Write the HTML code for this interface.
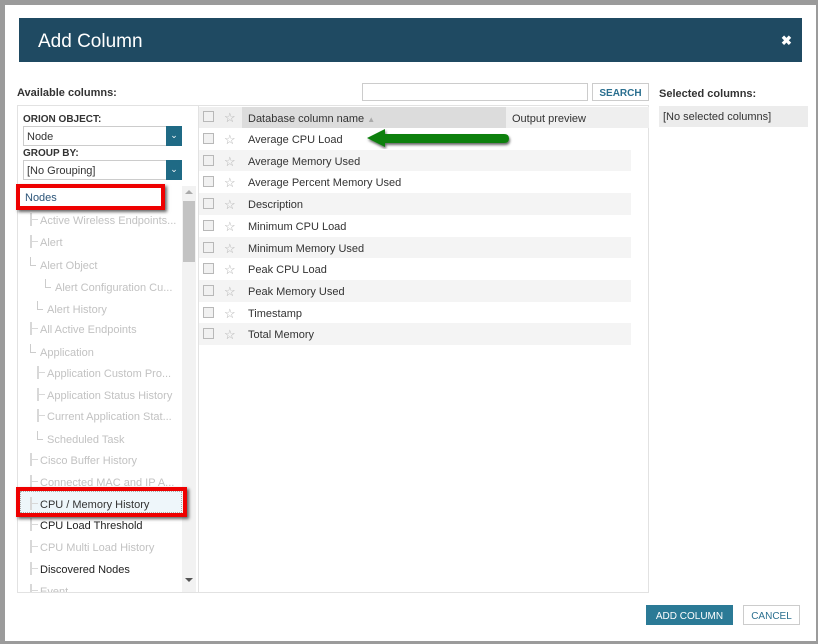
<!DOCTYPE html>
<html><head><meta charset="utf-8"><style>
*{margin:0;padding:0;box-sizing:border-box}
body{width:818px;height:644px;background:#9b9b9b;position:relative;overflow:hidden;font-family:"Liberation Sans",sans-serif;font-size:11px;color:#333}
.a{position:absolute}
#dlg{left:5px;top:5px;width:811px;height:636px;background:#fff}
#hdr{left:19px;top:18px;width:783px;height:44px;background:#1f4a62}
.t{white-space:nowrap}
.cb{position:absolute;width:11px;height:11px;border:1px solid #b8b8b8;background:#f1f1f1}
.star{position:absolute;color:#b0b0b0;font-size:13px;line-height:13px}
.tree{position:absolute;left:26px;white-space:nowrap;color:#c2c2c2;font-size:11px}
.tree span.l{display:inline-block;border-left:2px solid #d8d8d8;height:13px;width:6px;vertical-align:-2px;margin-right:4px;position:relative}
.tree span.l:after{content:"";position:absolute;left:0;top:6px;width:6px;border-top:1px solid #d8d8d8}
.tree span.e{display:inline-block;border-left:1px solid #ccc;border-bottom:1px solid #ccc;height:9px;width:6px;vertical-align:3px;margin-right:4px}
.red{position:absolute;border:4px solid #e00;box-shadow:2px 2px 3px rgba(0,0,0,.6)}
.btn{position:absolute;white-space:nowrap;font-size:10px;text-align:center;line-height:12px;padding-top:6px}
</style></head><body>
<div id="dlg" class="a"></div>
<div id="hdr" class="a"></div>
<div class="a t" style="left:38px;top:31px;font-size:19px;color:#fff">Add Column</div>
<div class="a t" style="left:781px;top:33px;font-size:13px;color:#fff;font-weight:bold">✖</div>

<div class="a t" style="left:17px;top:87px;font-weight:bold;font-size:11px;color:#333">Available columns:</div>
<div class="a" style="left:362px;top:83px;width:226px;height:18px;border:1px solid #ccc"></div>
<div class="btn" style="left:592px;top:83px;width:57px;height:18px;border:1px solid #ccc;color:#2a6f8f;font-weight:bold;padding-top:4px">SEARCH</div>
<div class="a t" style="left:659px;top:88px;font-weight:bold;font-size:11px">Selected columns:</div>
<div class="a t" style="left:659px;top:106px;width:149px;height:21px;background:#ececec;padding:5px 0 0 4px;color:#333">[No selected columns]</div>

<div class="a" style="left:17px;top:105px;width:632px;height:488px;border:1px solid #e2e2e2"></div>
<div class="a" style="left:198px;top:106px;width:1px;height:486px;background:#e2e2e2"></div>

<div class="a t" style="left:23px;top:114px;font-weight:bold;font-size:10px">ORION OBJECT:</div>
<div class="a" style="left:23px;top:126px;width:159px;height:20px;border:1px solid #ccc"></div>
<div class="a t" style="left:27px;top:131px">Node</div>
<div class="a" style="left:166px;top:126px;width:16px;height:20px;background:#1f6a85;color:#fff;font-size:9px;text-align:center;line-height:19px">⌄</div>
<div class="a t" style="left:23px;top:148px;font-weight:bold;font-size:10px">GROUP BY:</div>
<div class="a" style="left:23px;top:160px;width:159px;height:20px;border:1px solid #ccc"></div>
<div class="a t" style="left:27px;top:165px">[No Grouping]</div>
<div class="a" style="left:166px;top:160px;width:16px;height:20px;background:#1f6a85;color:#fff;font-size:9px;text-align:center;line-height:19px">⌄</div>

<div class="a" style="left:182px;top:186px;width:14px;height:406px;background:#f2f2f2"></div>
<div class="a" style="left:183px;top:201px;width:12px;height:61px;background:#c3c3c3"></div>
<div class="a" style="left:185px;top:190px;width:0;height:0;border-left:4px solid transparent;border-right:4px solid transparent;border-bottom:4px solid #aaa"></div>
<div class="a" style="left:185px;top:578px;width:0;height:0;border-left:4px solid transparent;border-right:4px solid transparent;border-top:4px solid #555"></div>

<div class="a t" style="left:25px;top:192px;color:#2b5478">Nodes</div>
<div class="tree" style="top:213px;left:30px"><span class="l"></span>Active Wireless Endpoints...</div>
<div class="tree" style="top:235px;left:30px"><span class="l"></span>Alert</div>
<div class="tree" style="top:257px;left:30px"><span class="e"></span>Alert Object</div>
<div class="tree" style="top:279px;left:45px"><span class="e"></span>Alert Configuration Cu...</div>
<div class="tree" style="top:301px;left:37px"><span class="e"></span>Alert History</div>
<div class="tree" style="top:322px;left:30px"><span class="l"></span>All Active Endpoints</div>
<div class="tree" style="top:344px;left:30px"><span class="e"></span>Application</div>
<div class="tree" style="top:366px;left:37px"><span class="l"></span>Application Custom Pro...</div>
<div class="tree" style="top:388px;left:37px"><span class="l"></span>Application Status History</div>
<div class="tree" style="top:409px;left:37px"><span class="l"></span>Current Application Stat...</div>
<div class="tree" style="top:431px;left:37px"><span class="e"></span>Scheduled Task</div>
<div class="tree" style="top:453px;left:30px"><span class="l"></span>Cisco Buffer History</div>
<div class="tree" style="top:475px;left:30px"><span class="l"></span>Connected MAC and IP A...</div>
<div class="a" style="left:20px;top:491px;width:162px;height:22px;background:#eef6fa;border:1px dotted #aaa"></div>
<div class="tree" style="top:497px;left:30px;color:#333"><span class="l"></span>CPU / Memory History</div>
<div class="tree" style="top:518px;left:30px;color:#222"><span class="l"></span>CPU Load Threshold</div>
<div class="tree" style="top:540px;left:30px"><span class="l"></span>CPU Multi Load History</div>
<div class="tree" style="top:562px;left:30px;color:#222"><span class="l"></span>Discovered Nodes</div>
<div class="a" style="left:18px;top:580px;width:163px;height:12px;overflow:hidden"><div class="tree" style="top:4px;left:12px"><span class="l"></span>Event</div></div>

<div class="red" style="left:16px;top:184px;width:149px;height:26px"></div>
<div class="red" style="left:16px;top:487px;width:171px;height:30px"></div>

<div class="a" style="left:199px;top:107px;width:450px;height:21px;background:#efefef"></div>
<div class="a" style="left:242px;top:107px;width:264px;height:21px;background:#dcdcdc"></div>
<div class="cb" style="left:203px;top:111px"></div>
<div class="star" style="left:224px;top:111px">☆</div>
<div class="a t" style="left:248px;top:113px">Database column name <span style="color:#aaa;font-size:8px">▲</span></div>
<div class="a t" style="left:512px;top:113px">Output preview</div>

<div id="rows"></div>
<script>
var n=["Average CPU Load","Average Memory Used","Average Percent Memory Used","Description","Minimum CPU Load","Minimum Memory Used","Peak CPU Load","Peak Memory Used","Timestamp","Total Memory"],h="";
for(var i=0;i<10;i++){var y=128+i*21.7;
if(i%2)h+='<div class="a" style="left:199px;top:'+y+'px;width:432px;height:21.7px;background:#f4f4f4"></div>';
h+='<div class="cb" style="left:203px;top:'+(y+5)+'px"></div><div class="star" style="left:224px;top:'+(y+5)+'px">☆</div><div class="a t" style="left:248px;top:'+(y+6)+'px">'+n[i]+'</div>';}
document.getElementById('rows').innerHTML=h;
</script>

<svg class="a" style="left:360px;top:124px" width="160" height="30">
<defs><filter id="s"><feDropShadow dx="1" dy="2" stdDeviation="1.2" flood-opacity=".6"/></filter></defs>
<path d="M7 14 L25 5 L25 10 L144 10 Q149 10 149 14.5 Q149 19 144 19 L25 19 L25 23 Z" fill="#0b800b" filter="url(#s)"/>
</svg>

<div class="btn" style="left:646px;top:605px;width:87px;height:20px;background:#2b7a96;color:#fff">ADD COLUMN</div>
<div class="btn" style="left:743px;top:605px;width:57px;height:20px;border:1px solid #ccc;color:#2a6f8f;padding-top:5px">CANCEL</div>
</body></html>
